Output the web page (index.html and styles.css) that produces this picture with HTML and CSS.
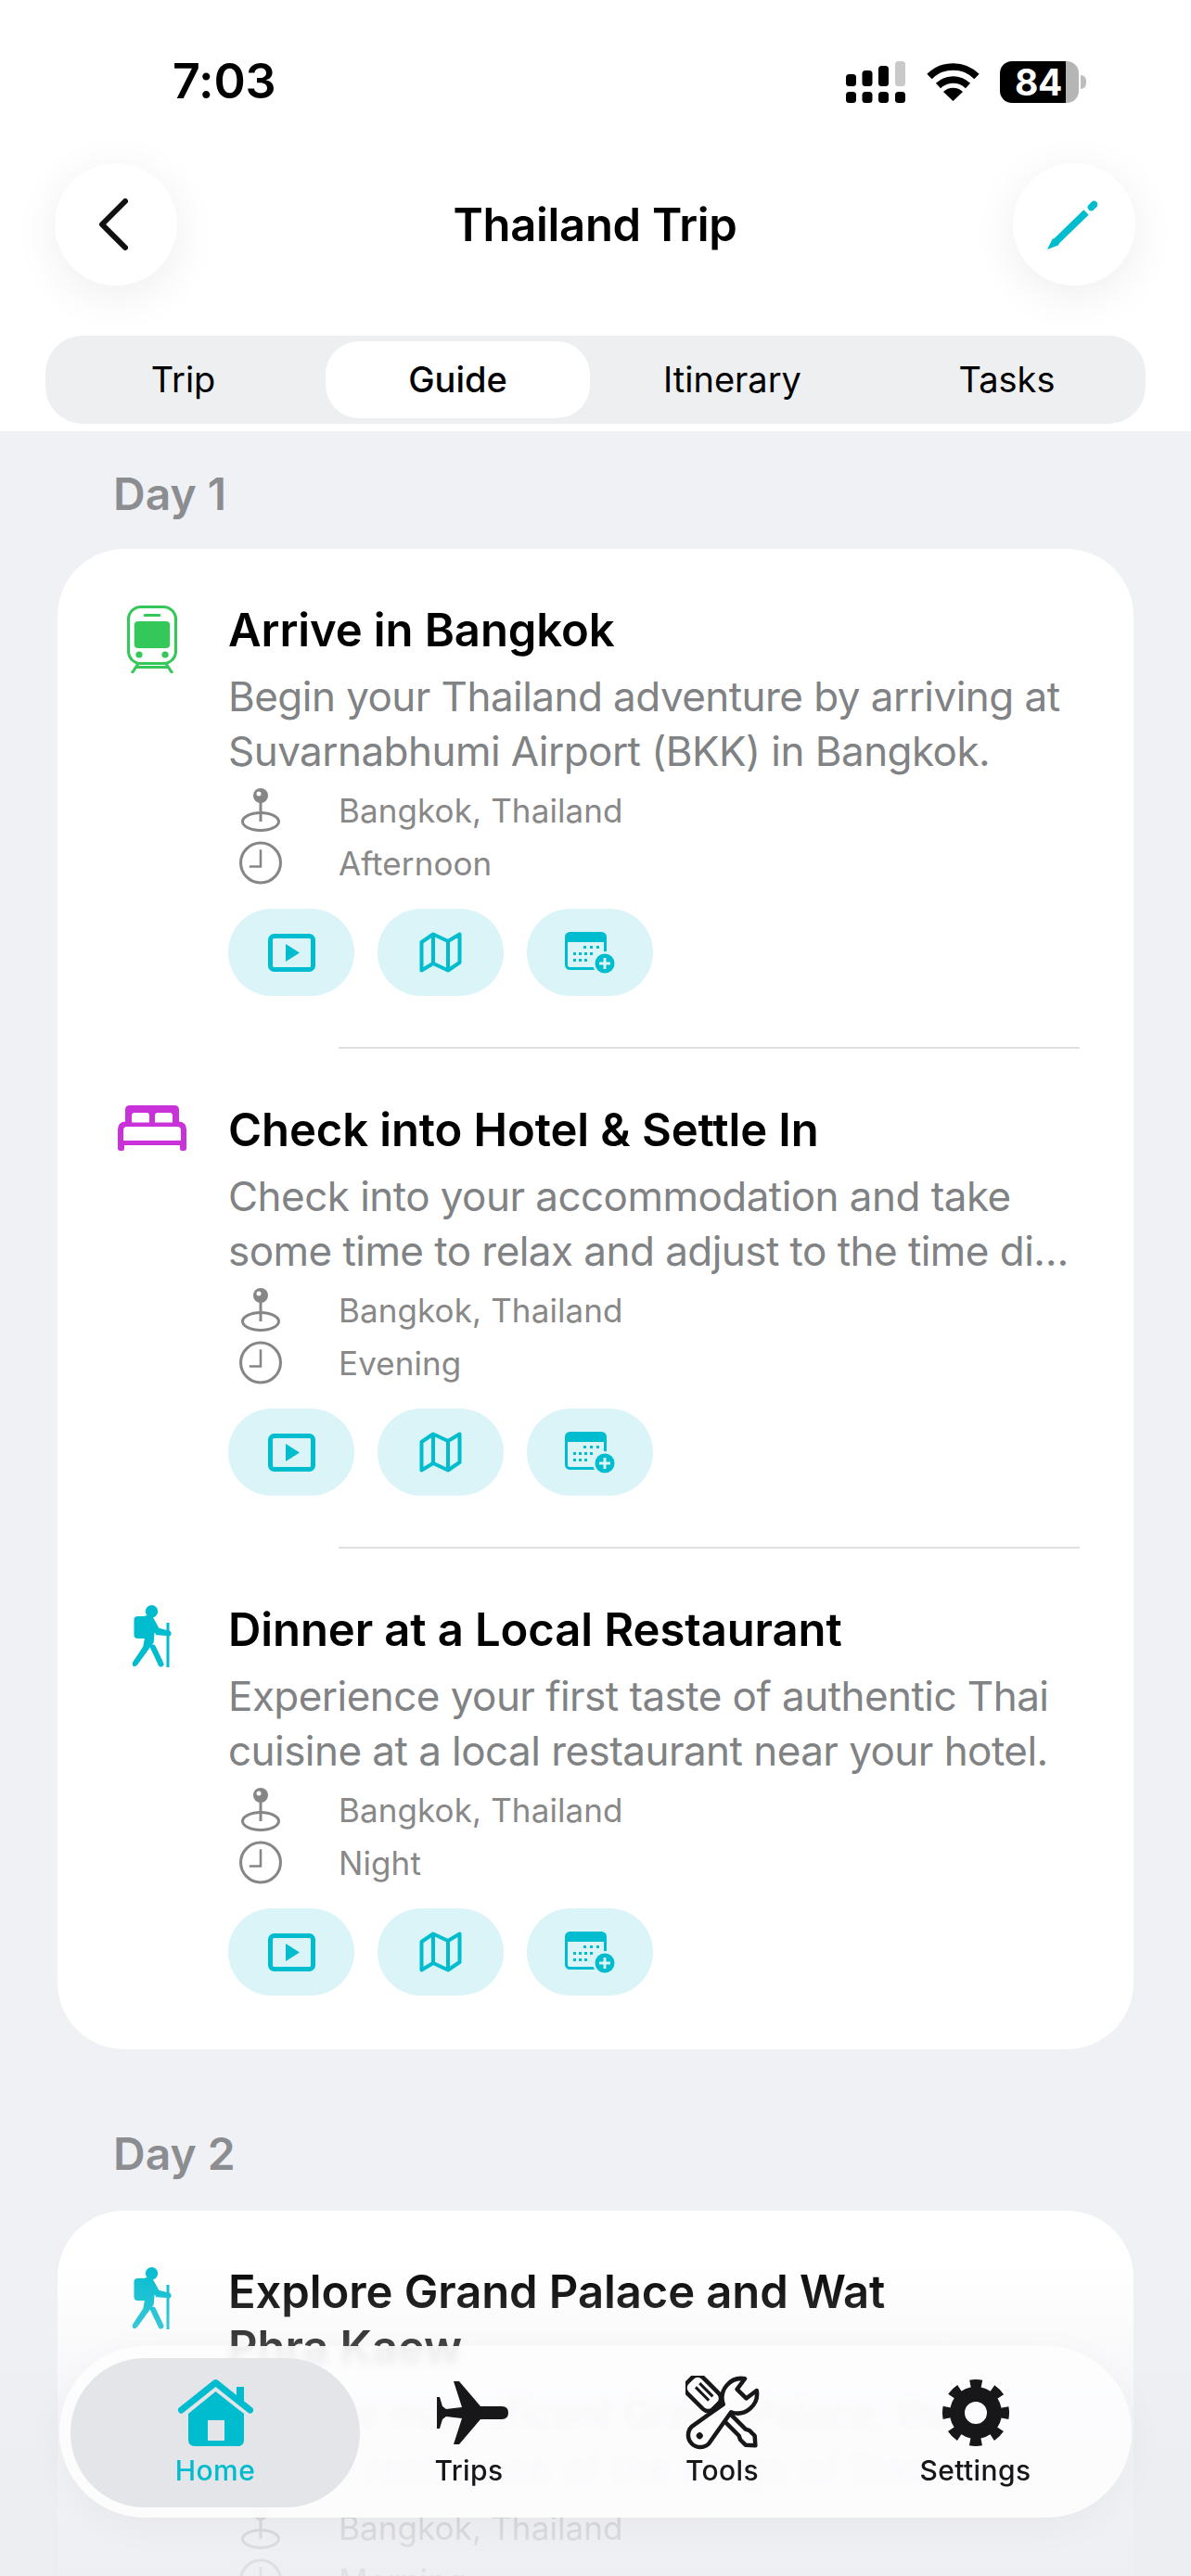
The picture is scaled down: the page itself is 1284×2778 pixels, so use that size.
FILE: index.html
```html
<!DOCTYPE html>
<html lang="en">
<head>
    <meta charset="UTF-8">
    <meta name="viewport" content="width=device-width, initial-scale=1.0">
    <title>Thailand Trip</title>
    <link rel="stylesheet" href="styles.css">
</head>
<body>
    <svg class="sprites" width="0" height="0">
        <symbol id="pin" viewBox="0 0 43 47">
            <ellipse cx="21.5" cy="36" rx="19.5" ry="9.5" fill="none" stroke="currentColor" stroke-width="3"/>
            <path d="M21.5 14V36" stroke="currentColor" stroke-width="3"/>
            <circle cx="21.5" cy="8" r="8" fill="currentColor"/>
            <circle cx="19.5" cy="6" r="2.5" fill="#fff"/>
        </symbol>
        <symbol id="clock" viewBox="0 0 46 46">
            <circle cx="23" cy="23" r="21" fill="none" stroke="currentColor" stroke-width="3"/>
            <path d="M23 9V27H11" fill="none" stroke="currentColor" stroke-width="2.5"/>
        </symbol>
        <symbol id="play" viewBox="0 0 51 41">
            <rect x="2.5" y="2.5" width="46" height="36" rx="4" fill="none" stroke="currentColor" stroke-width="5"/>
            <path d="M19 11L34 20.5L19 30Z" fill="currentColor"/>
        </symbol>
        <symbol id="map" viewBox="0 0 46 44">
            <path d="M2.5 11L15 2.5L31 10L43.5 2.5V33L31 41.5L15 34L2.5 41.5Z" fill="none" stroke="currentColor" stroke-width="4" stroke-linejoin="round"/>
            <path d="M15 2.5V34M31 10V41.5" fill="none" stroke="currentColor" stroke-width="4"/>
        </symbol>
        <symbol id="calendar" viewBox="0 0 54 45">
            <rect x="1.5" y="1.5" width="42" height="38" rx="4" fill="none" stroke="currentColor" stroke-width="3"/>
            <path d="M1.5 5.5a4 4 0 0 1 4-4h34a4 4 0 0 1 4 4V11H1.5Z" fill="currentColor"/>
            <path d="M20 15h3v3h-3zM27 15h3v3h-3zM34 15h3v3h-3zM9 22h3v3H9zM15 22h3v3h-3zM21 22h3v3h-3zM27 22h3v3h-3zM9 29h3v3H9zM15 29h3v3h-3zM21 29h3v3h-3z" fill="currentColor"/>
            <circle cx="43" cy="34" r="13" fill="#daf4f8"/>
            <circle cx="43" cy="34" r="10.5" fill="currentColor"/>
            <path d="M43 28V40M37 34H49" stroke="#daf4f8" stroke-width="3"/>
        </symbol>
        <symbol id="hiker" viewBox="0 0 42 67">
            <circle cx="20.5" cy="6.7" r="6.7" fill="currentColor"/>
            <rect x="1.5" y="12" width="15" height="24" rx="4" fill="currentColor"/>
            <path d="M14 12H20.5L28 25.5L39.5 28.5Q42 30 40 32.5L26 31.5L23 27L22 40L4 64.5Q1 67 0 63L12 45L14 34Z" fill="currentColor" stroke="currentColor" stroke-width="1.5" stroke-linejoin="round"/>
            <path d="M22 45.5L30.5 63.5" stroke="currentColor" stroke-width="6" stroke-linecap="round"/>
            <path d="M38 19V67" stroke="currentColor" stroke-width="3"/>
        </symbol>
    </svg>

    <header class="top">
        <div class="status-bar">
            <span class="time">7:03</span>
            <div class="status-icons">
                <svg class="signal" width="64" height="45" viewBox="0 0 64 45">
                    <rect x="0" y="14" width="11" height="13" rx="3.5"/>
                    <rect x="17.5" y="10" width="11" height="17" rx="3.5"/>
                    <rect x="35" y="5" width="11" height="22" rx="3.5"/>
                    <rect x="53" y="0" width="11" height="27" rx="3.5" fill="#c9c9c9"/>
                    <rect x="0" y="33" width="11" height="12" rx="3.5"/>
                    <rect x="17.5" y="33" width="11" height="12" rx="3.5"/>
                    <rect x="35" y="33" width="11" height="12" rx="3.5"/>
                    <rect x="53" y="33" width="11" height="12" rx="3.5"/>
                </svg>
                <svg class="wifi" width="57" height="41" viewBox="0 0 57 41">
                    <path d="M3 14.5A36 36 0 0 1 54 14.5" fill="none" stroke="#000" stroke-width="7.5"/>
                    <path d="M12.5 24.5A23 23 0 0 1 44.5 24.5" fill="none" stroke="#000" stroke-width="7.5"/>
                    <path d="M28.5 41L18 31A15 15 0 0 1 39 31Z"/>
                </svg>
                <div class="battery">
                    <div class="battery-body">
                        <span class="battery-level">84</span>
                        <span class="battery-rest"></span>
                    </div>
                    <span class="battery-nub"></span>
                </div>
            </div>
        </div>

        <div class="title-row">
            <button class="round-btn">
                <svg class="back-icon" width="32" height="56" viewBox="0 0 32 56">
                    <path d="M29 3L4 28L29 53" fill="none" stroke="#111" stroke-width="6" stroke-linecap="round" stroke-linejoin="round"/>
                </svg>
            </button>
            <h1>Thailand Trip</h1>
            <button class="round-btn">
                <svg class="edit-icon" width="54" height="53" viewBox="0 0 54 53">
                    <path d="M42 13L9 45" stroke="#00bccf" stroke-width="7.5"/>
                    <path d="M6 41L13 48L0 53Z" fill="#00bccf"/>
                    <path d="M47.5 7.5L50.5 4.5" stroke="#00bccf" stroke-width="7.5" stroke-linecap="round"/>
                </svg>
            </button>
        </div>

        <nav class="tabs">
            <a class="tab">Trip</a>
            <a class="tab active">Guide</a>
            <a class="tab">Itinerary</a>
            <a class="tab">Tasks</a>
        </nav>
    </header>

    <main class="content">
        <h2 class="day">Day 1</h2>
        <section class="card">
            <article class="item">
                <div class="item-icon">
                    <svg class="green" width="54" height="73" viewBox="0 0 52 73" preserveAspectRatio="none">
                        <rect x="1.5" y="1.5" width="49" height="61" rx="13" fill="none" stroke="currentColor" stroke-width="3"/>
                        <rect x="17" y="9" width="18" height="3" rx="1.5" fill="currentColor"/>
                        <rect x="7.5" y="17" width="37" height="29" rx="4" fill="currentColor"/>
                        <circle cx="12.5" cy="53" r="3.5" fill="currentColor"/>
                        <circle cx="39.5" cy="53" r="3.5" fill="currentColor"/>
                        <path d="M12 62L5 73M40 62L47 73M9 66.5H43" fill="none" stroke="currentColor" stroke-width="3"/>
                    </svg>
                </div>
                <div class="item-body">
                    <h3>Arrive in Bangkok</h3>
                    <p class="desc">Begin your Thailand adventure by arriving at Suvarnabhumi Airport (BKK) in Bangkok.</p>
                    <div class="meta"><svg class="meta-icon"><use href="#pin"/></svg><span>Bangkok, Thailand</span></div>
                    <div class="meta"><svg class="meta-icon"><use href="#clock"/></svg><span>Afternoon</span></div>
                    <div class="actions">
                        <button class="action"><svg width="51" height="41"><use href="#play"/></svg></button>
                        <button class="action"><svg width="46" height="44"><use href="#map"/></svg></button>
                        <button class="action"><svg width="54" height="45"><use href="#calendar"/></svg></button>
                    </div>
                </div>
            </article>
            <hr class="divider">
            <article class="item">
                <div class="item-icon">
                    <svg class="purple" width="74" height="49" viewBox="0 0 74 49">
                        <path fill-rule="evenodd" d="M13 0H61Q66 0 66 5V17.5Q74 18 74 26V46.5Q74 49 71 49H69Q67 49 67 46.5V43H7V46.5Q7 49 5 49H3Q0 49 0 46.5V26Q0 18 8 17.5V5Q8 0 13 0ZM18 8Q15 8 15 11V18.5H34V11Q34 8 31 8ZM43 8Q40 8 40 11V18.5H59V11Q59 8 56 8ZM10 23Q6 23 6 27V38H68V27Q68 23 64 23Z" fill="currentColor"/>
                    </svg>
                </div>
                <div class="item-body">
                    <h3>Check into Hotel &amp; Settle In</h3>
                    <p class="desc">Check into your accommodation and take some time to relax and adjust to the time di…</p>
                    <div class="meta"><svg class="meta-icon"><use href="#pin"/></svg><span>Bangkok, Thailand</span></div>
                    <div class="meta"><svg class="meta-icon"><use href="#clock"/></svg><span>Evening</span></div>
                    <div class="actions">
                        <button class="action"><svg width="51" height="41"><use href="#play"/></svg></button>
                        <button class="action"><svg width="46" height="44"><use href="#map"/></svg></button>
                        <button class="action"><svg width="54" height="45"><use href="#calendar"/></svg></button>
                    </div>
                </div>
            </article>
            <hr class="divider">
            <article class="item">
                <div class="item-icon">
                    <svg class="teal" width="42" height="67"><use href="#hiker"/></svg>
                </div>
                <div class="item-body">
                    <h3>Dinner at a Local Restaurant</h3>
                    <p class="desc">Experience your first taste of authentic Thai cuisine at a local restaurant near your hotel.</p>
                    <div class="meta"><svg class="meta-icon"><use href="#pin"/></svg><span>Bangkok, Thailand</span></div>
                    <div class="meta"><svg class="meta-icon"><use href="#clock"/></svg><span>Night</span></div>
                    <div class="actions">
                        <button class="action"><svg width="51" height="41"><use href="#play"/></svg></button>
                        <button class="action"><svg width="46" height="44"><use href="#map"/></svg></button>
                        <button class="action"><svg width="54" height="45"><use href="#calendar"/></svg></button>
                    </div>
                </div>
            </article>
        </section>

        <h2 class="day day-next">Day 2</h2>
        <section class="card">
            <article class="item">
                <div class="item-icon">
                    <svg class="teal" width="42" height="67"><use href="#hiker"/></svg>
                </div>
                <div class="item-body">
                    <h3>Explore Grand Palace and Wat Phra Kaew</h3>
                    <p class="desc">Visit the magnificent Grand Palace, the former residence of the Kings of Siam and</p>
                    <div class="meta"><svg class="meta-icon"><use href="#pin"/></svg><span>Bangkok, Thailand</span></div>
                    <div class="meta"><svg class="meta-icon"><use href="#clock"/></svg><span>Morning</span></div>
                </div>
            </article>
        </section>
    </main>

    <div class="fade"></div>

    <nav class="bottom-nav">
        <a class="nav-item active">
            <svg width="81" height="72" viewBox="0 0 81 72">
                <path d="M3.5 33L40.5 3.5L77.5 33" fill="none" stroke="currentColor" stroke-width="7" stroke-linecap="round" stroke-linejoin="round"/>
                <path d="M63 8H71V25L63 19Z" fill="currentColor"/>
                <path fill-rule="evenodd" d="M40.5 13L71 37V65Q71 72 64 72H18Q11 72 11 65V37ZM32 44V66H50V44Z" fill="currentColor"/>
            </svg>
            <span>Home</span>
        </a>
        <a class="nav-item">
            <svg class="plane-icon" width="77" height="68" viewBox="0 0 77 68">
                <path d="M18 0H24L47 27H70Q77 27 77 34T70 41H47L24 68H18L27 40L10 38L6 41L3 51H0V17H3L6 27L10 30L27 28Z" fill="currentColor"/>
            </svg>
            <span>Trips</span>
        </a>
        <a class="nav-item">
            <svg width="80" height="80" viewBox="0 0 80 80">
                <g transform="translate(40 40) rotate(45)" fill="#fdfdfe" stroke="currentColor" stroke-width="4.5" stroke-linejoin="round">
                    <rect x="-50" y="-12" width="40" height="24" rx="8"/>
                    <path d="M-10 -5H30L34 -7H42L50 0L42 7H34L30 5H-10Z"/>
                    <path d="M-40 -5H-20M-40 1H-20" fill="none" stroke-width="3"/>
                </g>
                <g transform="translate(40 40) rotate(-45)" fill="#fdfdfe" stroke="currentColor" stroke-width="4.5" stroke-linejoin="round">
                    <path d="M7 -6L-34 -13A13 13 0 0 0 -34 13L7 6A21 21 0 0 0 43 9L29 7V-7L43 -9A21 21 0 0 0 7 -6Z"/>
                    <circle cx="-35" cy="0" r="2.5" fill="currentColor" stroke-width="2"/>
                </g>
            </svg>
            <span>Tools</span>
        </a>
        <a class="nav-item">
            <svg width="72" height="72" viewBox="0 0 72 72">
                <circle cx="36" cy="36" r="20" fill="none" stroke="currentColor" stroke-width="16"/>
                <circle cx="36" cy="36" r="30.5" fill="none" stroke="currentColor" stroke-width="11" stroke-dasharray="12 11.95" stroke-dashoffset="6"/>
            </svg>
            <span>Settings</span>
        </a>
    </nav>
</body>
</html>
```
FILE: styles.css
```css
* { box-sizing: border-box; }
html, body { margin: 0; padding: 0; }
body { position: relative; width: 1284px; height: 2778px; overflow: hidden; background: #f0f1f5; font-family: Inter, "Liberation Sans", sans-serif; color: #000; }
h1, h2, h3, p { margin: 0; }
button { border: none; padding: 0; background: none; font: inherit; }
svg { display: block; }
.sprites { position: absolute; }

/* top area */
.top { height: 465px; background: #fff; padding: 0 49px; }
.status-bar { display: flex; justify-content: space-between; align-items: center; height: 176px; padding-left: 137px; }
.time { font-size: 52px; font-weight: 600; line-height: 60px; letter-spacing: -0.2px; }
.status-icons { display: flex; align-items: center; gap: 23px; margin-right: 64px; }
.battery { display: flex; align-items: center; gap: 2px; margin-left: -1px; }
.battery-body { display: flex; width: 85px; height: 45px; border-radius: 13px; overflow: hidden; }
.battery-level { width: 71px; background: #000; color: #fff; font-size: 39px; font-weight: 700; line-height: 45px; padding-left: 16px; letter-spacing: -0.5px; }
.battery-rest { flex: 1; background: #b5b5b5; }
.battery-nub { width: 6px; height: 15px; background: #bdbdbd; border-radius: 0 6px 6px 0; }

.title-row { display: flex; justify-content: space-between; align-items: center; height: 132px; margin: 0 11px 0 10px; }
.title-row h1 { font-size: 49px; font-weight: 600; letter-spacing: -0.3px; }
.round-btn { display: flex; align-items: center; justify-content: center; width: 132px; height: 132px; border-radius: 50%; background: #fff; box-shadow: 0 10px 50px rgba(0, 0, 0, 0.07); }
.back-icon { margin-right: 6px; }
.edit-icon { margin-right: 4px; }

.tabs { display: grid; grid-template-columns: repeat(4, 296px); height: 95px; margin-top: 54px; background: #eeeff1; border-radius: 40px; padding: 6px 0; }
.tab { display: flex; align-items: center; justify-content: center; margin: 0 5px 0 6px; padding-bottom: 2px; border-radius: 36px; font-size: 38px; font-weight: 400; }
.tab.active { background: #fff; font-weight: 500; }

/* list */
.content { padding: 38px 62px 0; }
.day { font-size: 48px; font-weight: 600; line-height: 60px; color: #8c8d91; margin: 0 0 29px 60px; }
.day-next { margin: 83px 0 31px 60px; }
.card { background: #fff; border-radius: 72px; padding: 58px 58px 58px 62px; }
.item { display: flex; }
.item-icon { display: flex; justify-content: center; flex: none; width: 80px; margin-right: 42px; padding-top: 3px; }
.item-body { flex: 1; min-width: 0; }
.item h3 { max-width: 780px; font-size: 49px; font-weight: 600; line-height: 60px; letter-spacing: -0.1px; }
.desc { margin-top: 12px; font-size: 44px; line-height: 59px; letter-spacing: -0.55px; color: #808284; }
.meta { display: flex; align-items: center; height: 57px; font-size: 35px; letter-spacing: 0.1px; color: #888; }
.desc + .meta { margin-top: 5px; }
.meta-icon { flex: none; width: 70px; height: 47px; margin-right: 49px; color: #868686; }
.actions { display: flex; gap: 25px; margin-top: 21px; }
.action { display: flex; align-items: center; justify-content: center; width: 136px; height: 94px; border-radius: 47px; background: #daf4f8; color: #00bccf; }
.divider { height: 2px; margin: 55px 0 58px 241px; border: none; background: #dfe0e2; }
.green { color: #34c759; }
.purple { color: #c832d8; }
.teal { color: #00bccf; }

/* bottom bar, floats over the list */
.fade { position: absolute; left: 0; right: 0; bottom: 0; height: 340px; background: linear-gradient(to bottom, rgba(236, 237, 241, 0), rgba(236, 237, 241, 0.75) 70%, rgba(236, 237, 241, 0.88)); }
.bottom-nav { position: absolute; left: 64px; top: 2530px; display: grid; grid-template-columns: repeat(4, 273px); width: 1156px; height: 185px; padding: 0 32px; border-radius: 93px; background: rgba(253, 253, 254, 0.9); box-shadow: 0 10px 40px rgba(0, 0, 0, 0.04); backdrop-filter: blur(4px); }
.nav-item { display: flex; flex-direction: column; align-items: center; height: 185px; font-size: 30px; font-weight: 500; letter-spacing: 0.4px; color: #17171a; padding-top: 32px; }
.nav-item svg { height: 80px; margin-bottom: 4px; }
.nav-item span { line-height: 36px; }
.nav-item .plane-icon { margin-left: 7px; }
.nav-item.active { height: 161px; margin: 13px -19px 0 -20px; padding-top: 19px; border-radius: 80px; background: #e4e5e8; color: #00bccf; }
```
